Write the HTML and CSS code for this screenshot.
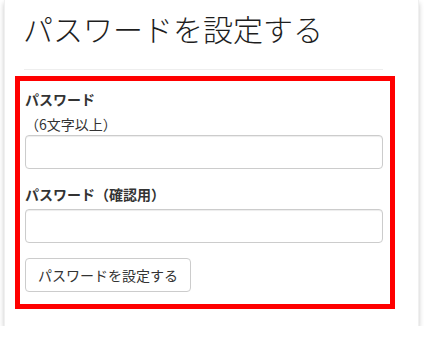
FILE: index.html
```html
<!DOCTYPE html>
<html lang="ja">
<head>
<meta charset="utf-8">
<link rel="stylesheet" href="styles.css">
</head>
<body>
<div class="card">
  <h1 class="title">パスワードを設定する</h1>
  <hr class="rule">
  <form class="form-box">
    <div class="form-group">
      <label class="label">パスワード</label>
      <div class="help">（6文字以上）</div>
      <input class="input" type="password">
    </div>
    <div class="form-group">
      <label class="label">パスワード（確認用）</label>
      <input class="input" type="password">
    </div>
    <button class="btn" type="button">パスワードを設定する</button>
  </form>
</div>
</body>
</html>
```

FILE: styles.css
```css
html, body {
  margin: 0;
  padding: 0;
  background: #ffffff;
}
body {
  font-family: "Noto Sans CJK JP", "Noto Sans", sans-serif;
  color: #333333;
  font-size: 14px;
  line-height: 20px;
}
.card {
  margin-left: 4px;
  width: 415px;
  height: 326px;
  box-sizing: border-box;
  background: #ffffff;
  border-left: 1px solid #f0f0f0;
  border-right: 1px solid #f0f0f0;
  box-shadow: 0 3px 5px rgba(0, 0, 0, 0.22);
  padding-top: 12px;
}
.title {
  margin: 0 0 0 18px;
  font-size: 30px;
  line-height: 33px;
  font-weight: 300;
  color: #1e1e1e;
}
.rule {
  margin: 24px 35px 0 19px;
  border: 0;
  border-top: 1px solid #eeeeee;
  height: 0;
}
.form-box {
  margin: 6px 23px 0 10px;
  border: 5px solid #ff0000;
  padding: 8px 7px 12px 5px;
  display: flex;
  flex-direction: column;
  align-items: flex-start;
}
.form-group {
  align-self: stretch;
  display: flex;
  flex-direction: column;
  margin-bottom: 15px;
}
.label {
  font-weight: 700;
  margin-bottom: 5px;
}
.help {
  margin-bottom: 1px;
}
.input {
  box-sizing: border-box;
  height: 34px;
  width: 100%;
  margin: 0;
  border: 1px solid #cccccc;
  border-radius: 4px;
  box-shadow: inset 0 1px 1px rgba(0, 0, 0, 0.075);
  background: #ffffff;
}
.btn {
  box-sizing: border-box;
  height: 34px;
  padding: 6px 12px;
  margin: 0;
  font-family: inherit;
  font-size: 14px;
  line-height: 20px;
  color: #333333;
  background: #ffffff;
  border: 1px solid #cccccc;
  border-radius: 4px;
}
```
